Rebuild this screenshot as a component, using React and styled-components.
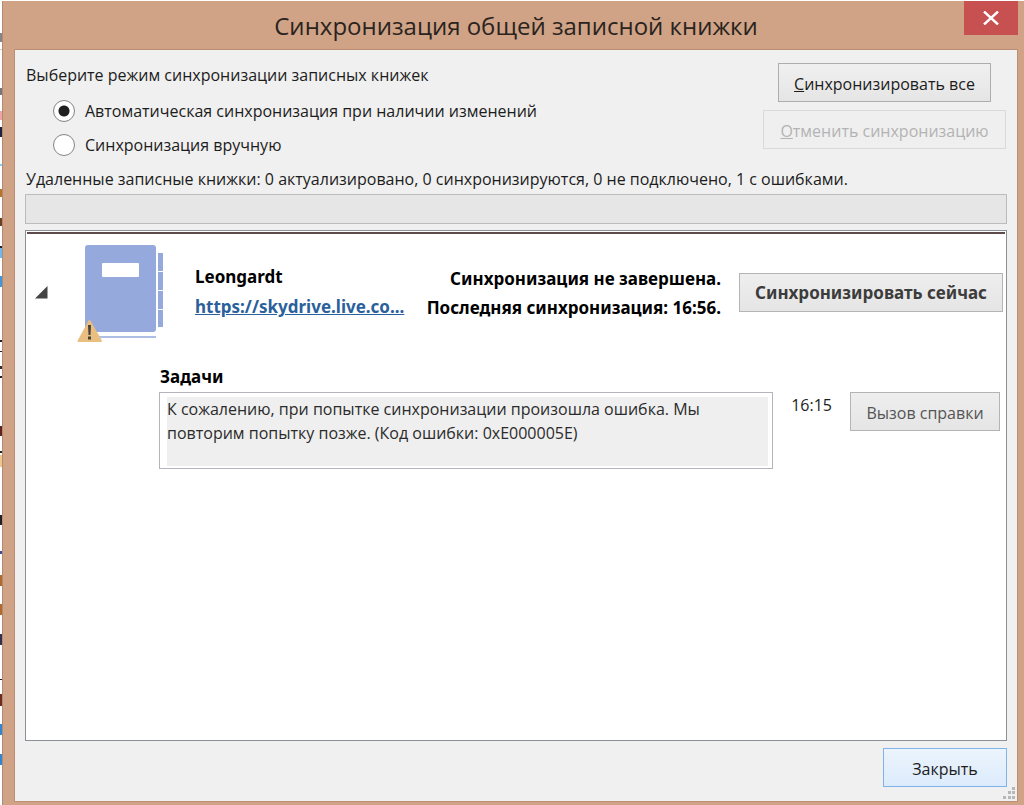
import React, { useState } from "react";
import styled, { createGlobalStyle } from "styled-components";

const GlobalStyle = createGlobalStyle`
  * { box-sizing: border-box; }
  body {
    margin: 0;
    background: #fff;
    color: #1c1c1c;
    font: 16px/24px "Open Sans", "Noto Sans", sans-serif;
  }
`;

const Desktop = styled.div`
  display: flex;
  min-height: 100vh;
  padding-top: 1px;
`;

const Backdrop = styled.svg`
  flex: none;
  width: 2px;
  height: 804px;
`;

const Window = styled.section`
  flex: 1;
  min-width: 0;
  display: flex;
  flex-direction: column;
  padding: 0 6px 3px 11px;
  border-left: 1px solid #b08a71;
  background: #d0a386;
`;

const TitleBar = styled.header`
  display: grid;
  grid-template-columns: 54px 1fr 54px;
  align-items: start;
  height: 48px;
`;

const Title = styled.h1`
  grid-column: 2;
  margin: 0;
  padding-top: 9px;
  font-size: 24px;
  line-height: 32px;
  font-weight: 400;
  text-align: center;
  white-space: nowrap;
  color: #2a2320;
`;

const CloseBox = styled.button`
  display: grid;
  place-items: center;
  width: 54px;
  height: 34px;
  padding: 0;
  border: 0;
  background: #c75050;
`;

const Client = styled.main`
  flex: 1;
  display: flex;
  flex-direction: column;
  padding: 13px 10px 0;
  border: 1px solid #bc8f74;
  background: #f0f0f0;
`;

const Top = styled.div`
  display: flex;
  justify-content: space-between;
  padding-right: 1px;
`;

const Modes = styled.fieldset`
  min-width: 0;
  margin: 0;
  padding: 0;
  border: 0;
`;

const Legend = styled.legend`
  padding: 0 1px;
  margin-bottom: 12px;
`;

const Option = styled.label`
  display: flex;
  align-items: center;
  gap: 10px;
  height: 24px;
  margin: 0 0 10px 28px;
`;

const Radio = styled.input`
  appearance: none;
  flex: none;
  width: 22px;
  height: 22px;
  margin: 0;
  border: 1px solid #858585;
  border-radius: 50%;
  background: #fff;
  &:checked {
    background: radial-gradient(circle, #1f1f1f 5px, #fff 6px);
  }
`;

const Actions = styled.div`
  display: flex;
  flex-direction: column;
  align-items: center;
  gap: 8px;
`;

const tones = {
  normal: "border-color:#adadad;background:linear-gradient(#f0f0f0,#e5e5e5);color:#1c1c1c;",
  muted: "border-color:#b4b4b4;background:linear-gradient(#eeeeee,#e5e5e5);color:#555;",
  strong: "border-color:#b4b4b4;background:linear-gradient(#eeeeee,#e5e5e5);color:#3c3c3c;font-family:'Noto Sans',sans-serif;font-size:17px;font-weight:700;",
  disabled: "border-color:#d9d9d9;background:#efefef;color:#b3b3b3;",
  primary: "border-color:#7eb4ea;background:linear-gradient(#ecf4fc,#dcebfc);color:#1c1c1c;",
};

const Button = styled.button`
  flex: none;
  width: ${(p) => p.$width}px;
  height: 39px;
  padding: 2px 0 0;
  border: 1px solid;
  font-family: inherit;
  font-size: 16px;
  line-height: 24px;
  white-space: nowrap;
  ${(p) => tones[p.$tone || "normal"]}
`;

const Summary = styled.p`
  margin: 0;
  padding: 0 1px;
`;

const Progress = styled.div`
  height: 30px;
  margin-top: 3px;
  border: 1px solid #bcbcbc;
  background: #e6e6e6;
`;

const List = styled.section`
  flex: 1;
  margin-top: 6px;
  padding: 1px;
  border: 1px solid #8a9096;
  background: #fff;
`;

const Notebook = styled.article`
  border-top: 2px solid #5d4a4b;
`;

const Row = styled.div`
  display: flex;
  align-items: center;
  padding: 11px 2px 0 8px;
`;

const Toggle = styled.button`
  display: flex;
  padding: 0;
  border: 0;
  background: none;
`;

const BookIcon = styled.svg`
  flex: none;
  margin: 0 0 -4px 29px;
`;

const Names = styled.div`
  flex: 1;
  display: flex;
  flex-direction: column;
  gap: 6px;
  margin-left: 31px;
  color: #000;
  font-family: "Noto Sans", sans-serif;
  font-size: 17px;
  font-weight: 700;
`;

const Link = styled.a`
  align-self: start;
  color: #2a609b;
`;

const State = styled.p`
  margin: 0 18px 0 0;
  padding-top: 2px;
  color: #000;
  font-family: "Noto Sans", sans-serif;
  font-size: 17px;
  font-weight: 700;
  line-height: 29px;
  text-align: right;
  white-space: nowrap;
`;

const Tasks = styled.div`
  padding: 26px 5px 0 132px;
`;

const TasksLabel = styled.label`
  display: block;
  margin-bottom: 3px;
  padding-left: 1px;
  color: #000;
  font-family: "Noto Sans", sans-serif;
  font-size: 17px;
  font-weight: 700;
`;

const TaskRow = styled.div`
  display: flex;
  align-items: flex-start;
`;

const Message = styled.textarea`
  flex: 1;
  min-width: 0;
  height: 77px;
  margin: 0;
  padding: 4px 4px 2px 7px;
  border: 1px solid #b4b4bc;
  outline: 0;
  resize: none;
  overflow: hidden;
  color: #2b2b2b;
  font: inherit;
  background: linear-gradient(#efefef, #efefef) content-box, #fff;
`;

const Time = styled.time`
  margin: 1px 18px;
`;

const Footer = styled.footer`
  display: flex;
  justify-content: flex-end;
  align-items: flex-start;
  height: 60px;
  padding-top: 7px;
`;

const Grip = styled.svg`
  flex: none;
  align-self: flex-end;
  margin: 0 -8px 2px -4px;
`;

const scraps = [
  [32, 9, "#858585"], [48, 1, "#c8c8c8"], [87, 7, "#777"], [110, 9, "#f0a3a8"],
  [126, 10, "#1b2340"], [163, 2, "#7fd0f5"], [188, 8, "#b5742c"], [217, 8, "#6b3f22"],
  [245, 2, "#222"], [247, 10, "#6db7f2"], [275, 11, "#3f97dd"], [339, 2, "#222"],
  [350, 1, "#222"], [365, 3, "#3a2a22"], [375, 2, "#222"], [425, 10, "#5e2420"],
  [450, 2, "#222"], [454, 12, "#eec58a"], [514, 10, "#222"], [550, 3, "#3c4da0"],
  [574, 11, "#b06a2c"], [603, 11, "#b06a2c"], [633, 11, "#31304f"], [678, 1, "#222"],
  [693, 12, "#6b2d20"], [723, 11, "#2f86d2"], [753, 11, "#2f86d2"],
];

export default function App() {
  const [mode, setMode] = useState("auto");
  return (
    <>
      <GlobalStyle />
      <Desktop>
        <Backdrop viewBox="0 0 2 804" aria-hidden="true">
          {scraps.map(([y, h, fill]) => (
            <rect key={y} x="0" y={y} width="2" height={h} fill={fill} />
          ))}
        </Backdrop>
        <Window>
          <TitleBar>
            <Title>Синхронизация общей записной книжки</Title>
            <CloseBox aria-label="Закрыть окно">
              <svg width="16" height="14" viewBox="0 0 16 14">
                <path d="M1 .5 15 13.5M15 .5 1 13.5" stroke="#fff" strokeWidth="2.4" />
              </svg>
            </CloseBox>
          </TitleBar>
          <Client>
            <Top>
              <Modes>
                <Legend>Выберите режим синхронизации записных книжек</Legend>
                <Option>
                  <Radio type="radio" name="mode" checked={mode === "auto"} onChange={() => setMode("auto")} />
                  Автоматическая синхронизация при наличии изменений
                </Option>
                <Option>
                  <Radio type="radio" name="mode" checked={mode === "manual"} onChange={() => setMode("manual")} />
                  Синхронизация вручную
                </Option>
              </Modes>
              <Actions>
                <Button $width={213}><u>С</u>инхронизировать все</Button>
                <Button $width={243} $tone="disabled" disabled><u>О</u>тменить синхронизацию</Button>
              </Actions>
            </Top>
            <Summary>
              Удаленные записные книжки: 0 актуализировано, 0 синхронизируются, 0 не подключено, 1 с ошибками.
            </Summary>
            <Progress role="progressbar" aria-label="Ход синхронизации" />
            <List>
              <Notebook>
                <Row>
                  <Toggle aria-label="Свернуть">
                    <svg width="13" height="13" viewBox="0 0 13 13">
                      <path d="M12.5 0V12.5H0Z" fill="#444" />
                    </svg>
                  </Toggle>
                  <BookIcon width="87" height="98" viewBox="0 0 87 98">
                    <rect x="8" y="0" width="71" height="87" rx="3" fill="#95a9dc" />
                    <rect x="25" y="18" width="37" height="14" rx="1" fill="#fff" />
                    <path d="M81 8h5v18h-5zM81 27h5v18h-5zM81 46h5v18h-5zM81 65h5v17h-5z" fill="#95a9dc" />
                    <path d="M22 92h57" stroke="#95a9dc" strokeWidth="1.5" />
                    <path d="M12.500 76 24 96H1.500Z" fill="#e8bf80" stroke="#e8bf80" strokeWidth="2" strokeLinejoin="round" />
                    <path d="M11 80h3l-.5 10h-2zM11 91.500h3v3h-3z" fill="#4a4238" />
                  </BookIcon>
                  <Names>
                    <span>Leongardt</span>
                    <Link href="#notebook">https://skydrive.live.co...</Link>
                  </Names>
                  <State>
                    Синхронизация не завершена.
                    <br />
                    Последняя синхронизация: 16:56.
                  </State>
                  <Button $width={264} $tone="strong">Синхронизировать сейчас</Button>
                </Row>
                <Tasks>
                  <TasksLabel htmlFor="task-message">Задачи</TasksLabel>
                  <TaskRow>
                    <Message
                      id="task-message"
                      readOnly
                      value={"К сожалению, при попытке синхронизации произошла ошибка. Мы\nповторим попытку позже. (Код ошибки: 0xE000005E)"}
                    />
                    <Time>16:15</Time>
                    <Button $width={150} $tone="muted">Вызов справки</Button>
                  </TaskRow>
                </Tasks>
              </Notebook>
            </List>
            <Footer>
              <Button $width={124} $tone="primary">Закрыть</Button>
              <Grip width="12" height="12" viewBox="0 0 12 12" aria-hidden="true">
                <path d="M9 0h3v3H9zM5 4h3v3H5zM9 4h3v3H9zM0 9h3v3H0zM5 9h3v3H5zM9 9h3v3H9z" fill="#b8b8b8" />
              </Grip>
            </Footer>
          </Client>
        </Window>
      </Desktop>
    </>
  );
}
